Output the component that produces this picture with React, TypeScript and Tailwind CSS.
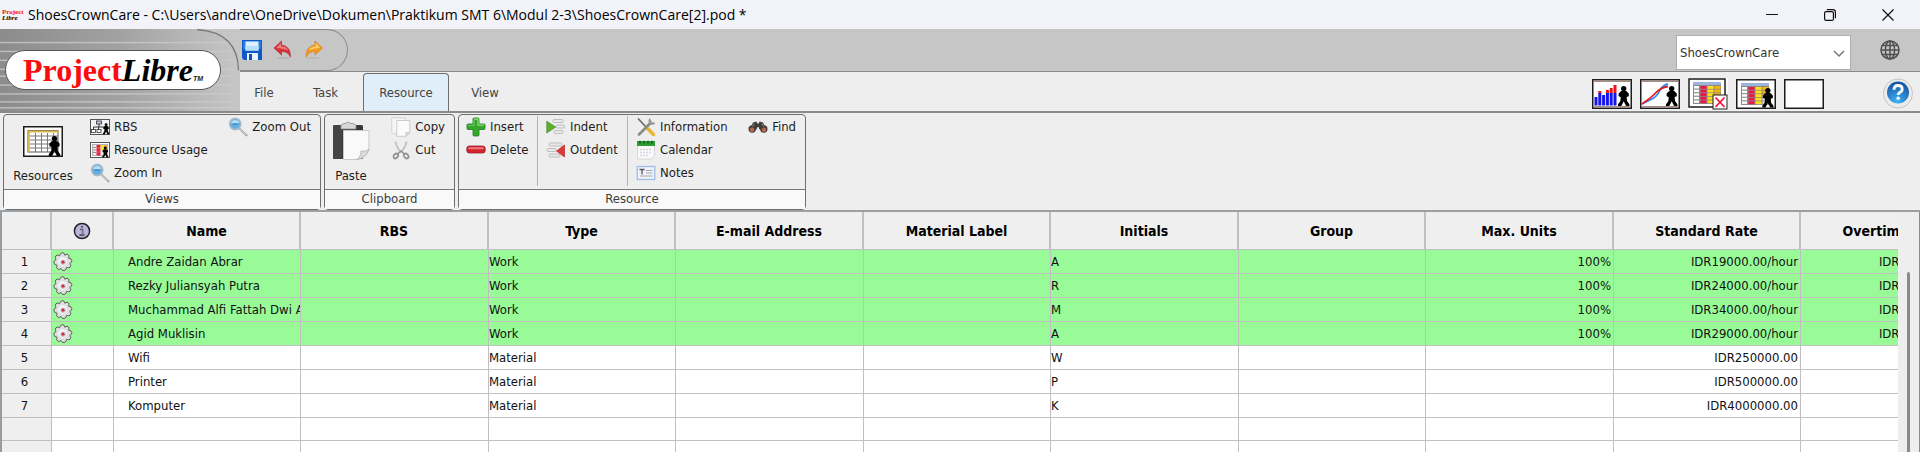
import React from "react";

type P = { className?: string };

const Person = ({ x, y, s = 1 }: { x: number; y: number; s?: number }) => (
  <g transform={`translate(${x} ${y}) scale(${s})`} fill="#000">
    <circle cx="6" cy="2.6" r="2.7" />
    <path d="M3.500 5h5l2.600 2.600v2.600L9 11l.3 4 2.400 3.200V20H8.400L6 15.200 3.600 20H.3v-1.800L2.700 15l.3-4-2.100-.8V7.600z" />
  </g>
);

const ChartFrame = ({ children }: { children?: React.ReactNode }) => (
  <svg viewBox="0 0 40 30" className="h-[30px] w-10">
    <rect x="0.75" y="0.75" width="38.5" height="28.5" fill="#fff" stroke="#1c1c1c" strokeWidth="1.5" />
    {children}
  </svg>
);

const Histogram = () => (
  <ChartFrame>
    <path d="M1.5 2.2h37M1.5 27.6h37" stroke="#a58f84" strokeWidth="1.4" />
    <g fill="#1414f0">
      <rect x="2.500" y="18" width="3" height="8.500" />
      <rect x="6.300" y="14" width="3" height="12.500" />
      <rect x="10.100" y="16" width="3" height="10.500" />
      <rect x="13.900" y="14" width="3" height="12.500" />
      <rect x="17.700" y="14" width="3" height="12.500" />
      <rect x="21.500" y="14" width="3" height="12.500" />
    </g>
    <g fill="#f01414">
      <rect x="6.300" y="12" width="3" height="2" />
      <rect x="13.900" y="11" width="3" height="3" />
      <rect x="17.700" y="9" width="3" height="5" />
      <rect x="21.500" y="6" width="3" height="8" />
    </g>
    <Person x={25.7} y={7} />
  </ChartFrame>
);

const Curves = () => (
  <ChartFrame>
    <path d="M1.5 2.2h37M1.5 27.6h37" stroke="#a58f84" strokeWidth="1.4" />
    <path d="M2 25L11 20.500Q17 18 20 11Q23 6 28 5" fill="none" stroke="#2e8cff" strokeWidth="1.800" />
    <path d="M2 25C6 22 10 20 14 15.500S22 8 28 7.500" fill="none" stroke="#e02020" strokeWidth="1.800" />
    <Person x={25.7} y={7} />
  </ChartFrame>
);

const ColorCells = () => (
  <>
    <rect x="5" y="4" width="28" height="22" fill="#8a8a8a" />
    <rect x="5" y="4" width="28" height="3" fill="#9db4dc" />
    {[0, 1, 2, 3, 4].map((r) => (
      <g key={r}>
        <rect x="6" y={8 + r * 3.6} width="5" height="2.500" fill="#fff" />
        <rect x="12.500" y={8 + r * 3.6} width="6" height="2.800" fill="#f0144c" />
        <rect x="19.500" y={8 + r * 3.6} width="6" height="2.800" fill="#ffe21c" />
        <rect x="26.500" y={8 + r * 3.6} width="6" height="2.800" fill={r < 3 ? "#ffb400" : "#ddd"} />
      </g>
    ))}
  </>
);

const TaskUsage = () => (
  <svg viewBox="0 0 40 32" className="h-8 w-10">
    <rect width="40" height="32" fill="#fafafa" />
    <rect x="1" y="1" width="36" height="28" fill="#fff" stroke="#1c1c1c" strokeWidth="1.500" />
    <ColorCells />
    <rect x="25" y="17" width="14" height="14" fill="#fff" stroke="#1c1c1c" />
    <path d="M27.500 19.500l9 9.500M36.500 19.500l-9 9.500" stroke="#f0143c" strokeWidth="1.800" />
  </svg>
);

const ResUsage = () => (
  <ChartFrame>
    <ColorCells />
    <Person x={26} y={9} s={0.98} />
  </ChartFrame>
);

const ResourcesIcon = () => (
  <svg viewBox="0 0 40 31" className="h-[31px] w-10">
    <rect x="0.75" y="0.75" width="38.5" height="29.500" fill="#fff" stroke="#1c1c1c" strokeWidth="1.500" />
    <rect x="5" y="4.500" width="30" height="21.500" fill="#fff" stroke="#555" />
    <path d="M5 5.500h31M6 5v21" stroke="#d9bb52" strokeWidth="1.800" />
    <path d="M7 10h28M7 14h28M7 18h28M7 22h28M12.500 7v19M18.500 7v19M24.500 7v19M30.500 7v19" stroke="#777" fill="none" />
    <Person x={25.5} y={10} />
  </svg>
);

const RbsIcon = () => (
  <svg viewBox="0 0 20 16" className="h-4 w-5 shrink-0">
    <rect x="0.5" y="0.5" width="19" height="15" fill="#f4f4f4" stroke="#555" />
    <path d="M9 5v3M3.500 11V8h11v2M8.500 8v3" stroke="#333" fill="none" />
    <rect x="6.500" y="2" width="5" height="3" fill="#b8c6e0" stroke="#333" strokeWidth=".8" />
    <rect x="1.500" y="10.500" width="4" height="3" fill="#fff" stroke="#333" strokeWidth=".8" />
    <rect x="7" y="10.500" width="4" height="3" fill="#fff" stroke="#333" strokeWidth=".8" />
    <Person x={12.8} y={4.2} s={0.55} />
  </svg>
);

const SmallUsage = () => (
  <svg viewBox="0 0 20 16" className="h-4 w-5 shrink-0">
    <rect x="0.5" y="0.5" width="19" height="15" fill="#fff" stroke="#555" />
    <rect x="2.500" y="2.500" width="15" height="11" fill="#eee" stroke="#999" strokeWidth=".7" />
    <path d="M3 5.500h3M3 8h3M3 10.500h3" stroke="#777" strokeWidth=".8" />
    <rect x="6.500" y="3" width="4" height="10.500" fill="#e8203f" />
    <path d="M6.500 6h4M6.500 10h4" stroke="#f7a0b0" strokeWidth=".5" />
    <rect x="10.500" y="3" width="6" height="5" fill="#f3e03a" />
    <rect x="14" y="3" width="3.500" height="4" fill="#f2b84a" />
    <Person x={12} y={4.5} s={0.55} />
  </svg>
);

const Magnifier = () => (
  <svg viewBox="0 0 20 20" className="h-5 w-5 shrink-0">
    <path d="M11.500 11.500l7 6.800" stroke="#a5a5a5" strokeWidth="2.200" strokeLinecap="round" />
    <path d="M11.500 11.300l6.600 6.300" stroke="#e0e0e0" strokeWidth="1" />
    <circle cx="7.200" cy="7" r="5.600" fill="#68aee0" stroke="#a9bccb" strokeWidth="1.600" />
    <path d="M3 6a4.500 4.500 0 0 1 8.400 0z" fill="#b7dcf5" />
    <path d="M4.800 7.300h5" stroke="#3d8bcb" strokeWidth="1.300" />
  </svg>
);

const PasteIcon = () => (
  <svg viewBox="0 0 38 40" className="h-10 w-[38px]">
    <rect x="1" y="4" width="30" height="34" rx="1.500" fill="#383838" />
    <rect x="1" y="4" width="9" height="34" rx="1.500" fill="#444" />
    <path d="M9 8V4l3-1.500h1.500Q16 -0.500 19 2.500h2L24 4v4z" fill="#d8d8d8" stroke="#8a8a8a" strokeWidth=".8" />
    <path d="M11.500 9.500h25.500v19Q33 38 24.500 38.500h-13z" fill="#f9f9f9" stroke="#c9c9c9" />
    <path d="M37 28Q34 31 29 30Q29 36 24.500 38.500Q34 37.500 37 28z" fill="#dcdcdc" stroke="#aaa" strokeWidth=".7" />
  </svg>
);

const CopyIcon = () => (
  <svg viewBox="0 0 20 20" className="h-5 w-5 shrink-0">
    <path d="M.8.8h13v16h-11l-2-2z" fill="#f6f6f6" stroke="#d2d2d2" />
    <path d="M5.800 3.500h13v12l-4 3.800h-9z" fill="#fbfbfb" stroke="#cbcbcb" />
    <path d="M18.800 15.500h-4v3.800z" fill="#ddd" stroke="#bbb" strokeWidth=".6" />
  </svg>
);

const CutIcon = () => (
  <svg viewBox="0 0 20 20" className="h-5 w-5 shrink-0">
    <path d="M4.500 1.500q.5 5 5.700 11M15.500 1.500q-.5 5-5.700 11" stroke="#c4c4c4" strokeWidth="2" fill="none" />
    <ellipse cx="4.800" cy="16" rx="2" ry="2.600" transform="rotate(40 4.800 16)" fill="none" stroke="#909090" strokeWidth="1.700" />
    <ellipse cx="15.200" cy="16" rx="2" ry="2.600" transform="rotate(-40 15.200 16)" fill="none" stroke="#909090" strokeWidth="1.700" />
    <path d="M6.500 14l3.500-3 3.500 3" stroke="#909090" strokeWidth="1.500" fill="none" />
  </svg>
);

const InsertIcon = () => (
  <svg viewBox="0 0 20 20" className="h-5 w-5 shrink-0">
    <path d="M7 2q0-1 1-1h4q1 0 1 1v5h5q1 0 1 1v3.500q0 1-1 1h-5V18q0 1-1 1H8q-1 0-1-1v-5.500H2q-1 0-1-1V8q0-1 1-1h5z" fill="#35a82c" stroke="#1e7d1c" strokeWidth=".8" />
    <path d="M8 2.200h4v6h6" stroke="#8fdc80" fill="none" strokeWidth="1.200" />
    <path d="M2 8.500h6V3" stroke="#6bcb5e" fill="none" strokeWidth="1.200" />
  </svg>
);

const DeleteIcon = () => (
  <svg viewBox="0 0 20 20" className="h-5 w-5 shrink-0">
    <rect x=".8" y="6" width="18.400" height="7" rx="2.500" fill="#d3222b" stroke="#97202a" strokeWidth=".8" />
    <rect x="2.200" y="7.200" width="15.600" height="2" rx="1" fill="#ef7a80" />
  </svg>
);

const IndentIcon = () => (
  <svg viewBox="0 0 20 20" className="h-5 w-5 shrink-0">
    <g fill="#e9e9e9" stroke="#b4b4b4" strokeWidth=".8">
      <rect x="7" y="2.500" width="10" height="3" rx="1" />
      <rect x="10" y="8" width="8.500" height="3" rx="1" />
      <rect x="8" y="13.500" width="9" height="3" rx="1" />
    </g>
    <path d="M.8 4.200l8.800 5.800-8.800 6z" fill="#5fae2c" stroke="#418a1c" strokeWidth=".7" />
  </svg>
);

const OutdentIcon = () => (
  <svg viewBox="0 0 20 20" className="h-5 w-5 shrink-0">
    <g fill="#e9e9e9" stroke="#b4b4b4" strokeWidth=".8">
      <rect x="3" y="3" width="13" height="3" rx="1" />
      <rect x="1" y="8.500" width="9" height="3" rx="1" />
      <rect x="3" y="14" width="11" height="3" rx="1" />
    </g>
    <path d="M18.500 5l-8 6 8 6z" fill="#e03a36" stroke="#b82624" strokeWidth=".7" />
  </svg>
);

const InfoIcon = () => (
  <svg viewBox="0 0 20 20" className="h-5 w-5 shrink-0">
    <path d="M2 1.500l8.500 9" stroke="#6d6d6d" strokeWidth="1.800" />
    <path d="M10.800 10.800l6.700 6.700" stroke="#e9b52c" strokeWidth="3.400" strokeLinecap="round" />
    <path d="M14.500 6L3 17.500" stroke="#8c8c8c" strokeWidth="2.600" strokeLinecap="round" />
    <path d="M13.500 1.500q-1.500 3 .3 5.200 2.200 1.500 5.200-.3l-2.800-.6-1.200-1.600z" fill="#a5a5a5" stroke="#777" strokeWidth=".6" />
  </svg>
);

const CalendarIcon = () => (
  <svg viewBox="0 0 20 20" className="h-5 w-5 shrink-0">
    <path d="M1.500 4h17v11.500l-3 3.500h-14z" fill="#fafafa" stroke="#cfcfcf" strokeWidth=".8" />
    <rect x="1" y="1" width="18" height="5" fill="#2f9a34" />
    <path d="M4 .8v2.700M8 .8v2.700M12 .8v2.700M16 .8v2.700" stroke="#0d5b16" strokeWidth="1.400" />
    <path d="M4 9.500h12M4 12.500h12M4 15.500h9" stroke="#d9d3e3" strokeWidth="1.500" strokeDasharray="2 1" />
  </svg>
);

const NotesIcon = () => (
  <svg viewBox="0 0 20 20" className="h-5 w-5 shrink-0">
    <rect x="1.200" y="3.500" width="17.600" height="13" fill="#eef2fa" stroke="#9fbce8" strokeWidth="1.300" />
    <path d="M3.500 6.500h5M6 6.500v5" stroke="#555" strokeWidth="1.300" />
    <path d="M10 7.500h6.500M10 10h6.500M4 13h12.500" stroke="#a8a8a8" />
  </svg>
);

const FindIcon = () => (
  <svg viewBox="0 0 20 20" className="h-5 w-5 shrink-0">
    <path d="M5 5.500l3.500-1 .8 2h1.400l.8-2 3.500 1 3.500 7h-7L10.500 10h-1L8.500 12.500h-7z" fill="#3f3f3f" />
    <circle cx="4.200" cy="12" r="3.700" fill="#4a3a38" />
    <circle cx="15.800" cy="12" r="3.700" fill="#4a3a38" />
    <circle cx="4" cy="12.800" r="2.200" fill="#b5684c" />
    <circle cx="16" cy="12.800" r="2.200" fill="#b5684c" />
    <path d="M6 6.500l-1.500 3M14 6.500l1.500 3" stroke="#8a8a8a" />
  </svg>
);

const SaveIcon = () => (
  <svg viewBox="0 0 20 20" className="h-5 w-5">
    <path d="M0 0h20v20H2l-2-2z" fill="#1158c7" />
    <path d="M1 1h18v8H1z" fill="#2c7ce6" />
    <rect x="3.500" y="1.500" width="13" height="9" fill="#dff1ff" />
    <path d="M3.500 6h13v4.500h-13z" fill="#b5e0fb" />
    <rect x="5" y="13" width="11" height="7" fill="#e9f4ff" />
    <rect x="7" y="14" width="3" height="6" fill="#0f4fb8" />
  </svg>
);

const UndoIcon = () => (
  <svg viewBox="0 0 20 20" className="h-5 w-5">
    <ellipse cx="11" cy="18" rx="7" ry="1" fill="#b5b5b5" />
    <path d="M8.500 1v4q9 1 9 12-3-6-9-5.500V15L1 8z" fill="#d8343a" stroke="#b5272e" strokeWidth=".7" />
    <path d="M8 3v3.200q5 .5 7.500 4.300-4-2-12-2.500z" fill="#ee8084" />
  </svg>
);

const RedoIcon = () => (
  <svg viewBox="0 0 20 20" className="h-5 w-5">
    <ellipse cx="9" cy="18" rx="7" ry="1" fill="#b9b9b9" />
    <path d="M11 1v4Q2 6 2 17q3-6 9-5.500V15l7.500-7z" fill="#f39a1e" stroke="#d57c12" strokeWidth=".7" />
    <path d="M11.800 3v3.200q-5 .5-7.500 4.300 4-2 12-2.500z" fill="#fccb6d" />
  </svg>
);

const GlobeIcon = () => (
  <svg viewBox="0 0 20 20" className="h-5 w-5" fill="none" stroke="#4f4f4f" strokeWidth="1.500">
    <circle cx="10" cy="10" r="9" />
    <ellipse cx="10" cy="10" rx="4.600" ry="9" />
    <path d="M10 1v18M1 10h18M2.500 5.500h15M2.500 14.500h15" />
  </svg>
);

const HelpIcon = () => (
  <svg viewBox="0 0 32 32" className="h-8 w-8">
    <defs>
      <radialGradient id="help" cx=".45" cy=".9" r=".9">
        <stop offset="0" stopColor="#3fb3f5" />
        <stop offset="1" stopColor="#14509f" />
      </radialGradient>
    </defs>
    <circle cx="16" cy="16.500" r="14.500" fill="#ececec" stroke="#c4c4c4" />
    <circle cx="16" cy="15.500" r="11" fill="url(#help)" />
    <path d="M12 12.800q0-4.300 4.100-4.300t4.100 3.500q0 2.200-2.200 3.300-1.800 1-1.800 2.700" fill="none" stroke="#fff" strokeWidth="2.800" />
    <circle cx="16.200" cy="21.300" r="1.700" fill="#fff" />
  </svg>
);

const GearIcon = () => (
  <svg viewBox="0 0 20 20" className="ml-px h-5 w-5">
    <path
      d="M8 1.200q2-1 3 0l.8 2 2.200-1q1.800.3 2 2l-.4 2 2.400.6q1.200 1.700.6 3.300l-1.800 1.300 1 2.200q-.3 1.800-2 2.200l-2.300-.4-.8 2.400q-1.700 1.200-3.300.6L8 16.500l-2.200 1q-1.800-.3-2.200-2l.4-2.300-2.400-.9Q.5 10.500 1.200 9L3 7.600 2.200 5.300q.3-1.800 2-2.100l2.500.3z"
      fill="#dedede"
      stroke="#5f5f5f"
      strokeWidth="1"
    />
    <circle cx="9.500" cy="9.500" r="4.700" fill="#f1f1f1" />
    <circle cx="10" cy="10.200" r="2.500" fill="#bdb5b9" />
    <circle cx="10" cy="10.200" r="1.400" fill="#c92a48" />
  </svg>
);

const IndicatorIcon = () => (
  <svg viewBox="0 0 18 18" className="mx-auto h-[18px] w-[18px]">
    <circle cx="9" cy="9" r="7.600" fill="#b9b4d8" stroke="#23232b" strokeWidth="1.500" />
    <path d="M7 7.500h2.500V13M6.500 13h5M8 4.700h1.900" stroke="#3a3a4a" strokeWidth="1.500" fill="none" />
    <path d="M7.500 7.800h1.700V13" stroke="#dcd8f0" strokeWidth=".6" fill="none" />
  </svg>
);

const LogoBlock = () => (
  <div className="relative flex h-full w-60 shrink-0 items-start overflow-hidden">
    <svg viewBox="0 0 240 83" preserveAspectRatio="none" className="absolute inset-0 h-full w-full">
      <defs>
        <linearGradient id="metal" x1="0" x2="1">
          <stop offset="0" stopColor="#8c8c8c" />
          <stop offset=".5" stopColor="#a2a2a2" />
          <stop offset="1" stopColor="#c6c6c6" />
        </linearGradient>
        <linearGradient id="stripe" x1="0" x2="1">
          <stop offset="0" stopColor="#bcbcbc" />
          <stop offset="1" stopColor="#c9c9c9" />
        </linearGradient>
      </defs>
      <rect width="240" height="83" fill="#c6c6c6" />
      <path d="M0 0h200Q238 4 238 42h2v41H0z" fill="url(#metal)" />
      {[13, 22, 31, 40, 47, 56, 65, 73, 79].map((y) => (
        <rect key={y} y={y} width="236" height="1.500" fill="url(#stripe)" />
      ))}
      <path d="M197 .5Q238 3 238.500 42" fill="none" stroke="#7a7a7a" strokeWidth="1.300" />
    </svg>
    <div className="relative mt-[21px] ml-[5px] flex h-10 w-[216px] items-center justify-center rounded-full border border-[#555] bg-white font-['Liberation_Serif',serif] text-[32px] leading-8 font-bold">
      <span className="text-[#fb0d0d]">Project</span>
      <span className="text-black italic">Libre</span>
      <span className="self-end pb-1 font-['Liberation_Sans',sans-serif] text-[7px] leading-3 italic">TM</span>
    </div>
  </div>
);

const RibbonButton = ({ icon, label }: { icon: React.ReactNode; label: string }) => (
  <button type="button" className="flex h-[23px] items-center gap-1 whitespace-nowrap">
    <span className="flex h-5 w-5 items-center">{icon}</span>
    {label}
  </button>
);

const BigButton = ({ icon, label, className }: { icon: React.ReactNode; label: string } & P) => (
  <button type="button" className={`flex shrink-0 flex-col items-center justify-between pb-1 ${className}`}>
    <span className="flex h-[52px] items-center">{icon}</span>
    <span className="leading-4">{label}</span>
  </button>
);

const Group = ({ title, className, children }: { title: string; className: string; children: React.ReactNode }) => (
  <section className={`flex shrink-0 flex-col rounded-sm border border-[#6e6e6e] ${className}`}>
    <div className="flex h-[74px] pr-[9px] pb-px pl-[7px]">{children}</div>
    <h2 className="h-5 border-t border-[#777] bg-[#f9f9f9] text-center leading-[18px] text-[#3c3c3c]">{title}</h2>
  </section>
);

const Divider = () => <div className="mt-px mb-[2px] w-px shrink-0 bg-[#b4b4b4]" />;

type Row = { name: string; type: string; initials: string; units?: string; rate: string; overtime?: string };

const rows: Row[] = [
  { name: "Andre Zaidan Abrar", type: "Work", initials: "A", units: "100%", rate: "IDR19000.00/hour", overtime: "IDR19000.00/hour" },
  { name: "Rezky Juliansyah Putra", type: "Work", initials: "R", units: "100%", rate: "IDR24000.00/hour", overtime: "IDR24000.00/hour" },
  { name: "Muchammad Alfi Fattah Dwi A", type: "Work", initials: "M", units: "100%", rate: "IDR34000.00/hour", overtime: "IDR34000.00/hour" },
  { name: "Agid Muklisin", type: "Work", initials: "A", units: "100%", rate: "IDR29000.00/hour", overtime: "IDR29000.00/hour" },
  { name: "Wifi", type: "Material", initials: "W", rate: "IDR250000.00" },
  { name: "Printer", type: "Material", initials: "P", rate: "IDR500000.00" },
  { name: "Komputer", type: "Material", initials: "K", rate: "IDR4000000.00" },
];

const headings = ["Name", "RBS", "Type", "E-mail Address", "Material Label", "Initials", "Group", "Max. Units", "Standard Rate", "Overtime Rate"];

const cell = "overflow-hidden border-r border-b border-[#c0c0c0] p-0 whitespace-nowrap";
const headCell = "h-[38px] border-r-2 border-b border-[#c0c0c0] bg-[#efefef] p-0 text-sm font-bold text-black";
const rowHead = "border-r border-b border-[#c0c0c0] bg-[#efefef] p-0 pr-1 text-center font-normal";

const ResourceTable = () => (
  <table className="w-[1985px] table-fixed border-separate border-spacing-0 leading-4 text-[#111]">
    <colgroup>
      <col className="w-[50px]" />
      <col className="w-[62px]" />
      <col className="w-[187px]" />
      <col className="w-[188px]" />
      <col className="w-[187px]" />
      <col className="w-[188px]" />
      <col className="w-[187px]" />
      <col className="w-[188px]" />
      <col className="w-[187px]" />
      <col className="w-[188px]" />
      <col className="w-[187px]" />
      <col className="w-[188px]" />
    </colgroup>
    <thead>
      <tr>
        <th className={headCell} aria-label="Row" />
        <th className={headCell} aria-label="Indicators">
          <IndicatorIcon />
        </th>
        {headings.map((h) => (
          <th key={h} scope="col" className={headCell}>
            {h}
          </th>
        ))}
      </tr>
    </thead>
    <tbody>
      {rows.map((r, i) => (
        <tr key={r.name} className={r.units ? "h-6 bg-[#98fb98]" : "h-6 bg-white"}>
          <th scope="row" className={rowHead}>
            {i + 1}
          </th>
          <td className={cell}>{r.units && <GearIcon />}</td>
          <td className={`${cell} pl-[14px]`}>{r.name}</td>
          <td className={cell} />
          <td className={cell}>{r.type}</td>
          <td className={cell} />
          <td className={cell} />
          <td className={cell}>{r.initials}</td>
          <td className={cell} />
          <td className={`${cell} pr-[2px] text-right`}>{r.units}</td>
          <td className={`${cell} pr-[2px] text-right`}>{r.rate}</td>
          <td className={`${cell} pr-[2px] text-right`}>{r.overtime}</td>
        </tr>
      ))}
      {Array.from({ length: 12 }, (_, i) => (
        <tr key={i} className="h-[23px] bg-white">
          <td className={rowHead} />
          {Array.from({ length: 11 }, (_, c) => (
            <td key={c} className={cell} />
          ))}
        </tr>
      ))}
    </tbody>
  </table>
);

export default function App() {
  return (
    <div className="flex h-screen flex-col overflow-hidden bg-[#eeeeee] font-['DejaVu_Sans_Condensed','DejaVu_Sans',sans-serif] text-[13px] text-[#1c1c1c]">
      <header className="flex h-[29px] shrink-0 items-center bg-[#f2f3f9] pl-[2px]">
        <span className="flex w-5 flex-col font-['Liberation_Serif',serif] text-[7px] leading-[6px] font-bold">
          <span className="text-[#fb0d0d]">Project</span>
          <span className="text-black italic">Libre</span>
        </span>
        <h1 className="ml-[6px] flex-1 font-['Open_Sans','Noto_Sans',sans-serif] text-sm text-black">
          ShoesCrownCare - C:\Users\andre\OneDrive\Dokumen\Praktikum SMT 6\Modul 2-3\ShoesCrownCare[2].pod *
        </h1>
        <div className="flex gap-[46px] pr-[26px]">
          <button type="button" aria-label="Minimize">
            <svg viewBox="0 0 12 12" className="h-3 w-3"><path d="M0 5.500h12" stroke="#111" /></svg>
          </button>
          <button type="button" aria-label="Restore">
            <svg viewBox="0 0 12 12" className="h-3 w-3" fill="none" stroke="#111" strokeWidth="1.200">
              <rect x=".6" y="2.600" width="8.800" height="8.800" rx="1.500" />
              <path d="M2.800.6h6q2.600 0 2.600 2.600v6" />
            </svg>
          </button>
          <button type="button" aria-label="Close">
            <svg viewBox="0 0 12 12" className="h-3 w-3"><path d="M.5.5l11 11M11.500.5l-11 11" stroke="#111" strokeWidth="1.200" /></svg>
          </button>
        </div>
      </header>

      <div className="flex h-[84px] shrink-0 border-b-2 border-[#8a8a8a]">
        <LogoBlock />
        <div className="flex min-w-0 flex-1 flex-col">
          <div className="flex h-[43px] items-start border-b border-[#8a8a8a] bg-[#c6c6c6]">
            <div className="-ml-10 flex h-[42px] w-[148px] items-center gap-[11px] rounded-r-full border-t border-r border-b border-[#8a8a8a] pl-[42px]">
              <button type="button" aria-label="Save"><SaveIcon /></button>
              <button type="button" aria-label="Undo"><UndoIcon /></button>
              <button type="button" aria-label="Redo"><RedoIcon /></button>
            </div>
            <div className="relative mt-[6px] ml-auto h-[35px] w-[175px]">
              <select
                aria-label="Project"
                className="h-full w-full appearance-none border border-[#acacb4] bg-white pl-[3px] text-[#333]"
              >
                <option>ShoesCrownCare</option>
              </select>
              <svg viewBox="0 0 12 8" className="pointer-events-none absolute top-[15px] right-[6px] h-2 w-3">
                <path d="M1 1l5 5 5-5" fill="none" stroke="#777" strokeWidth="1.500" />
              </svg>
            </div>
            <button type="button" aria-label="Language" className="mt-[11px] mr-5 ml-[29px]">
              <GlobeIcon />
            </button>
          </div>
          <nav className="flex flex-1 items-stretch text-[#444]">
            <button type="button" className="w-12 pt-[3px]">File</button>
            <button type="button" className="w-[75px] pt-[3px]">Task</button>
            <button type="button" className="mt-px w-[86px] rounded-t-sm border-x border-t border-[#6e6e6e] bg-[#e0eef9]">Resource</button>
            <button type="button" className="w-[72px] pt-[3px]">View</button>
            <div className="ml-auto flex items-center gap-2 pt-1">
              <button type="button" aria-label="Histogram"><Histogram /></button>
              <button type="button" aria-label="Charts"><Curves /></button>
              <button type="button" aria-label="Task usage"><TaskUsage /></button>
              <button type="button" aria-label="Resource usage"><ResUsage /></button>
              <button type="button" aria-label="No sub view"><ChartFrame /></button>
            </div>
            <button type="button" aria-label="Help" className="mr-[6px] ml-[58px] pt-[3px]"><HelpIcon /></button>
          </nav>
        </div>
      </div>

      <div className="flex h-[99px] shrink-0 gap-[3px] border-b-2 border-[#9aa0a4] pt-px pl-[3px]">
        <Group title="Views" className="w-[318px]">
          <BigButton icon={<ResourcesIcon />} label="Resources" className="w-[64px]" />
          <div className="ml-[15px]">
            <RibbonButton icon={<RbsIcon />} label="RBS" />
            <RibbonButton icon={<SmallUsage />} label="Resource Usage" />
            <RibbonButton icon={<Magnifier />} label="Zoom In" />
          </div>
          <div className="ml-auto">
            <RibbonButton icon={<Magnifier />} label="Zoom Out" />
          </div>
        </Group>
        <Group title="Clipboard" className="w-[131px]">
          <BigButton icon={<PasteIcon />} label="Paste" className="w-[38px]" />
          <div className="ml-auto">
            <RibbonButton icon={<CopyIcon />} label="Copy" />
            <RibbonButton icon={<CutIcon />} label="Cut" />
          </div>
        </Group>
        <Group title="Resource" className="w-[348px]">
          <div className="w-[71px] shrink-0">
            <RibbonButton icon={<InsertIcon />} label="Insert" />
            <RibbonButton icon={<DeleteIcon />} label="Delete" />
          </div>
          <Divider />
          <div className="w-[89px] shrink-0 pl-2">
            <RibbonButton icon={<IndentIcon />} label="Indent" />
            <RibbonButton icon={<OutdentIcon />} label="Outdent" />
          </div>
          <Divider />
          <div className="pl-2">
            <RibbonButton icon={<InfoIcon />} label="Information" />
            <RibbonButton icon={<CalendarIcon />} label="Calendar" />
            <RibbonButton icon={<NotesIcon />} label="Notes" />
          </div>
          <div className="ml-auto">
            <RibbonButton icon={<FindIcon />} label="Find" />
          </div>
        </Group>
      </div>

      <main className="flex min-h-0 flex-1 border-r border-l-2 border-r-[#8a8c92] border-l-[#9a9ca2]">
        <div className="min-w-0 flex-1 overflow-hidden">
          <ResourceTable />
        </div>
        <div className="flex w-[21px] shrink-0 justify-center pt-[60px]">
          <div className="w-[3px] rounded-t-full bg-[#8a8a8a]" />
        </div>
      </main>
    </div>
  );
}
